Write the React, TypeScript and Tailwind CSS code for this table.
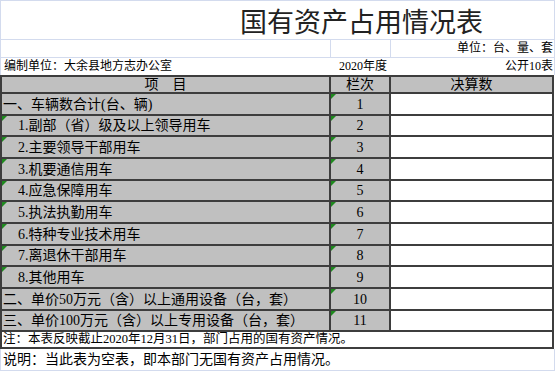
import React from 'react';

interface Row {
  label: string;
  no: string;
  indent: boolean;
}

const rows: Row[] = [
  { label: '一、车辆数合计(台、辆)', no: '1', indent: false },
  { label: '1.副部（省）级及以上领导用车', no: '2', indent: true },
  { label: '2.主要领导干部用车', no: '3', indent: true },
  { label: '3.机要通信用车', no: '4', indent: true },
  { label: '4.应急保障用车', no: '5', indent: true },
  { label: '5.执法执勤用车', no: '6', indent: true },
  { label: '6.特种专业技术用车', no: '7', indent: true },
  { label: '7.离退休干部用车', no: '8', indent: true },
  { label: '8.其他用车', no: '9', indent: true },
  { label: '二、单价50万元（含）以上通用设备（台，套）', no: '10', indent: false },
  { label: '三、单价100万元（含）以上专用设备（台，套）', no: '11', indent: false },
];

// little green comment marker in the top-left corner of a cell
const Mark = () => (
  <span className="absolute left-0 top-0 w-0 h-0 border-t-[5px] border-t-[#1f8a1f] border-r-[5px] border-r-transparent" />
);

const App = () => {
  return (
    <div className="w-[555px] h-[374px] bg-white overflow-hidden font-['Liberation_Serif','Noto_Sans_CJK_SC',serif] text-black">
      <div className="border-t border-l border-r border-[#d3dbee]">
        {/* Title */}
        <div className="h-[39px] border-b border-[#d3dbee] flex items-center pl-[239px]">
          <span className="text-[27px] leading-none font-['Noto_Sans_CJK_SC',sans-serif] text-[#222]">国有资产占用情况表</span>
        </div>

        {/* Unit */}
        <div className="h-[18px] grid grid-cols-[330px_60px_1fr] border-b border-[#d3dbee] text-[12px] leading-[17px]">
          <div className="border-r border-[#d3dbee]" />
          <div className="border-r border-[#d3dbee]" />
          <div className="text-right pr-[1px]">单位：台、量、套</div>
        </div>

        {/* Compiler */}
        <div className="h-[17px] grid grid-cols-[330px_60px_1fr] text-[12px] leading-[17px]">
          <div className="pl-[3px]">编制单位：大余县地方志办公室</div>
          <div className="text-right pr-[4px]">2020年度</div>
          <div className="text-right pr-[1px]">公开10表</div>
        </div>
      </div>

      {/* Table */}
      <div className="w-[554px] border-t-2 border-l-2 border-r-2 border-[#3d3d3d] text-[14px]">
        <div className="grid grid-cols-[329px_60px_1fr] grid-rows-[17px_22px_21px_22px_22px_21px_22px_22px_21px_22px_22px_21px]">
          <div className="bg-[#c0c0c0] border-b-2 border-r-2 border-[#3d3d3d] text-center leading-[15px]">项　目</div>
          <div className="bg-[#c0c0c0] border-b-2 border-r-2 border-[#3d3d3d] text-center leading-[15px]">栏次</div>
          <div className="bg-[#c0c0c0] border-b-2 border-[#3d3d3d] text-center leading-[15px]">决算数</div>

          {rows.map((r) => (
            <React.Fragment key={r.no}>
              <div className="relative bg-[#c0c0c0] border-b-2 border-r-2 border-[#3d3d3d] flex items-center whitespace-nowrap">
                {r.indent && <Mark />}
                <span className={r.indent ? 'ml-[16px]' : 'ml-[1px]'}>{r.label}</span>
              </div>
              <div className="relative bg-[#c0c0c0] border-b-2 border-r-2 border-[#3d3d3d] flex items-center justify-center">
                <Mark />
                <span>{r.no}</span>
              </div>
              <div className="bg-white border-b-2 border-[#3d3d3d]" />
            </React.Fragment>
          ))}
        </div>

        <div className="h-[17px] border-b-2 border-[#3d3d3d] bg-white text-[12.5px] leading-[15px] pl-[1px] whitespace-nowrap">
          注：本表反映截止2020年12月31日，部门占用的国有资产情况。
        </div>
      </div>

      {/* Remark */}
      <div className="h-[22px] border-l border-r border-b border-[#d3dbee] text-[14px] leading-[22px] pl-[2px] whitespace-nowrap">
        说明：当此表为空表，即本部门无国有资产占用情况。
      </div>
    </div>
  );
};

export default App;
